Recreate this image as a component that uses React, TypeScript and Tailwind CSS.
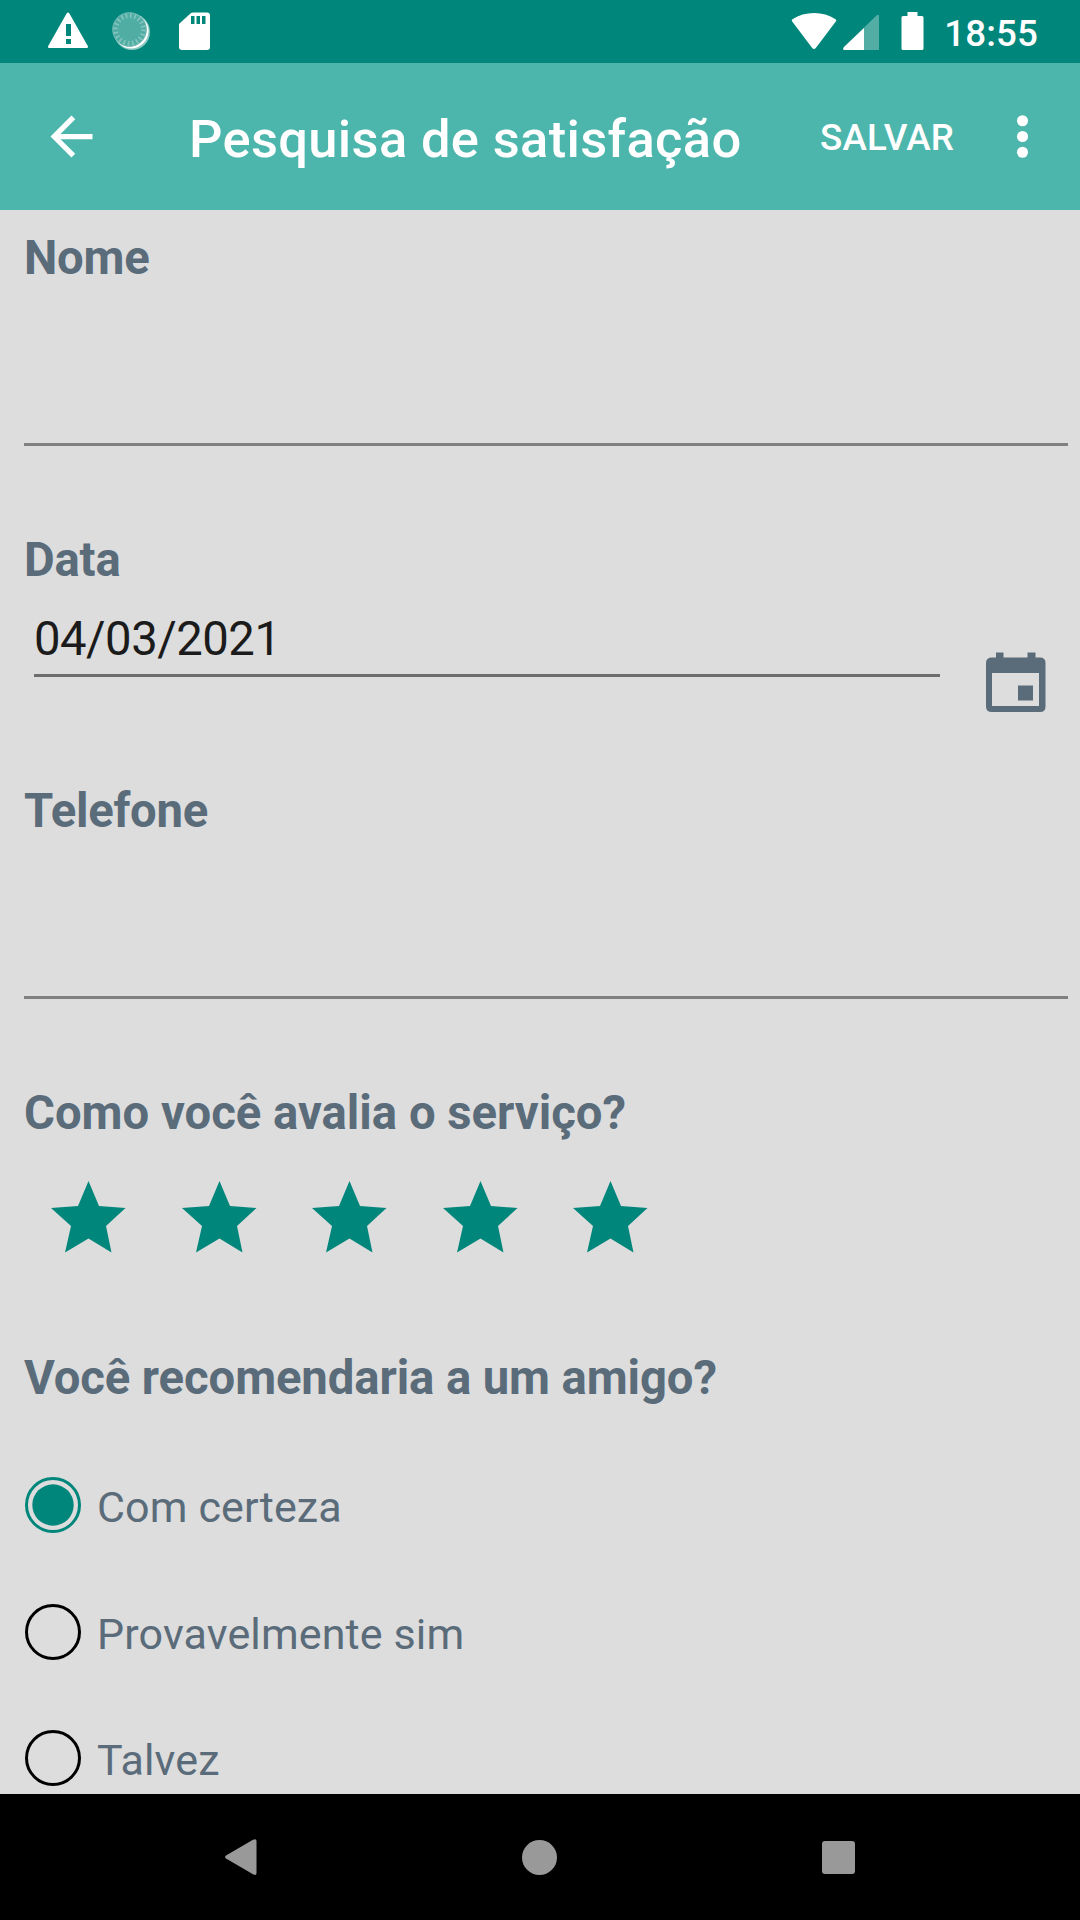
import React, { useState } from 'react';

const options = ['Com certeza', 'Provavelmente sim', 'Talvez'];

const StatusBar: React.FC = () => (
  <div className="flex h-[63px] items-start bg-[#00867b] text-white">
    <svg className="ml-12 mt-3 h-9 w-10" viewBox="0 0 40 36" fill="currentColor">
      <path
        fillRule="evenodd"
        d="M18.6 1.4Q20 -.4 21.4 1.4L39.8 34Q40.4 36 39 36H1Q-.4 36 .2 34ZM18 12V24H23V12ZM18 27V32H23V27Z"
      />
    </svg>
    <svg className="ml-6 mt-3 h-[38px] w-[38px]" viewBox="0 0 38 38">
      <circle cx="20" cy="20" r="18" fill="#8ac8c2" />
      <circle cx="19" cy="19" r="17.500" fill="#fff" />
      <circle cx="17.500" cy="17.500" r="17" fill="#4fada4" />
      <circle cx="17.500" cy="17.500" r="14" fill="none" stroke="#84c4be" strokeWidth="5" strokeDasharray="1.7 2.7" />
      <circle cx="17.500" cy="17.500" r="16.800" fill="none" stroke="#70b9b2" strokeWidth="1" />
    </svg>
    <svg className="ml-[29px] mt-3 h-[38px] w-[31px]" viewBox="0 0 31 38" fill="currentColor">
      <path
        fillRule="evenodd"
        d="M12 1Q13 .5 14 .5H28Q31 .5 31 3.5V35Q31 38 28 38H3Q0 38 0 35V12.5Q0 11.5 1 11ZM12 4V12H15.500V4ZM17.500 4V12H21V4ZM23 4V12H26.500V4Z"
      />
    </svg>

    <svg className="ml-auto mt-3 h-[38px] w-[46px]" viewBox="0 0 46 38" fill="currentColor">
      <path d="M1.200 9.500Q.2 8.200 1.500 7.200Q11 1 23 1T44.500 7.200Q45.800 8.200 44.800 9.500L24.800 36Q23 38.200 21.200 36Z" />
    </svg>
    <svg className="ml-1.5 mt-[14px] h-9 w-9" viewBox="0 0 36 36" fill="currentColor">
      <path d="M36 36V2Q36 0 34 1L1 33Q-1 36 1.500 36Z" opacity=".32" />
      <path d="M21 36V14L1 33Q-1 36 1.500 36Z" />
    </svg>
    <svg className="ml-[22px] mt-3 h-[38px] w-[23px]" viewBox="0 0 23 38" fill="currentColor">
      <path d="M6.500 0H16.500V4H21Q22.500 4 22.500 5.500V36.500Q22.500 38 21 38H2Q.5 38 .5 36.500V5.500Q.5 4 2 4H6.500Z" />
    </svg>
    <span className="ml-[20px] mr-[42px] mt-[14px] text-[36.75px] font-medium leading-10 tracking-[0.1px]">
      18:55
    </span>
  </div>
);

const AppBar: React.FC = () => (
  <div className="flex h-[147px] items-center bg-[#4db6ac] pb-px text-white">
    <button className="ml-10">
      <svg className="h-[63px] w-[63px]" viewBox="0 0 24 24" fill="currentColor">
        <path d="M20 11H7.830l5.590-5.590L12 4l-8 8 8 8 1.410-1.410L7.830 13H20v-2z" />
      </svg>
    </button>
    <h1 className="ml-[86px] pt-1.5 text-[52.5px] font-medium leading-[60px] tracking-[0.33px]">
      Pesquisa de satisfação
    </h1>
    <button className="ml-auto pt-[3px] text-[36.75px] font-medium leading-10 tracking-[0.15px]">SALVAR</button>
    <button className="ml-[37px] mr-[26px]">
      <svg className="h-[63px] w-[63px]" viewBox="0 0 24 24" fill="currentColor">
        <circle cx="12" cy="6" r="2.100" />
        <circle cx="12" cy="12" r="2.100" />
        <circle cx="12" cy="18" r="2.100" />
      </svg>
    </button>
  </div>
);

interface LabelProps {
  children: React.ReactNode;
  className?: string;
}

const Label: React.FC<LabelProps> = ({ children, className = '' }) => (
  <h2 className={`text-[47.25px] font-bold leading-[56px] ${className}`}>{children}</h2>
);

const Star: React.FC = () => (
  <svg className="h-[72px] w-[75px]" viewBox="0 0 75 72" fill="#00867b">
    <path d="M37.500 0L48 25L74.500 27L55 45L60.500 71.500L37.500 57.500L14 71.500L20 45L0 27L27 25Z" />
  </svg>
);

const App: React.FC = () => {
  const [selected, setSelected] = useState(options[0]);

  return (
    <div className="flex h-[1920px] w-[1080px] flex-col overflow-hidden bg-[#dddddd] font-['Roboto',sans-serif] text-[#5a6b7a]">
      <StatusBar />
      <AppBar />

      <main className="flex-1 overflow-hidden pl-6 pt-5">
        <section className="mr-3 h-[216px] border-b-[3px] border-[#808080]">
          <Label className="tracking-[-0.25px]">Nome</Label>
        </section>

        <section className="mt-[86px] h-[251px]">
          <Label className="tracking-[-0.2px]">Data</Label>
          <div className="flex">
            <div className="ml-2.5 mt-[23px] h-[66px] w-[906px] border-b-[3px] border-[#6d6d6d] text-[47.25px] leading-[56px] tracking-[-0.5px] text-[#1b1b1b]">
              04/03/2021
            </div>
            <svg className="ml-[36px] mt-[59px] h-[72px] w-[80px]" viewBox="0 0 80 72" fill="currentColor">
              <path
                fillRule="evenodd"
                d="M20 5.500H27.500V10.500H51.500V5.500H59.500V10.500H64Q69.500 10.500 69.500 16V59.500Q69.500 65 64 65H16Q10 65 10 59.500V16Q10 10.500 16 10.500H20ZM16 26V59H63V26ZM42 38.500H57V53.500H42Z"
              />
            </svg>
          </div>
        </section>

        <section className="mr-3 h-[216px] border-b-[3px] border-[#808080]">
          <Label className="tracking-[-0.3px]">Telefone</Label>
        </section>

        <section className="mt-[86px] h-[265px]">
          <Label>Como você avalia o serviço?</Label>
          <div className="ml-[27px] mt-10 flex gap-[55.500px]">
            {[1, 2, 3, 4, 5].map((n) => (
              <Star key={n} />
            ))}
          </div>
        </section>

        <section>
          <Label className="tracking-[-0.1px]">Você recomendaria a um amigo?</Label>
          <div className="mt-9">
            {options.map((option) => (
              <button
                key={option}
                className="flex h-[126.500px] w-full items-center"
                onClick={() => setSelected(option)}
              >
                <svg className="ml-[0.5px] h-14 w-14" viewBox="0 0 56 56">
                  <circle
                    cx="28"
                    cy="28"
                    r="26.500"
                    fill="none"
                    stroke={option === selected ? '#00867b' : '#000'}
                    strokeWidth="3"
                  />
                  {option === selected && <circle cx="28" cy="28" r="20.700" fill="#00867b" />}
                </svg>
                <span className="ml-[16.500px] pt-1 text-[43px] leading-[52px] tracking-[0.13px]">{option}</span>
              </button>
            ))}
          </div>
        </section>
      </main>

      <nav className="flex h-[126px] items-center justify-between bg-black pl-[225px] pr-[225px] text-[#999]">
        <svg className="h-9 w-8" viewBox="0 0 32 36" fill="currentColor">
          <path d="M1 16.500L28 .8Q31.500 -.8 31.500 2V34Q31.500 37 28 35.200L1 19.500Q-1 18 1 16.500Z" />
        </svg>
        <div className="h-[35px] w-[35px] rounded-full bg-[#999]" />
        <div className="h-[33px] w-[33px] rounded-[3px] bg-[#999]" />
      </nav>
    </div>
  );
};

export default App;
